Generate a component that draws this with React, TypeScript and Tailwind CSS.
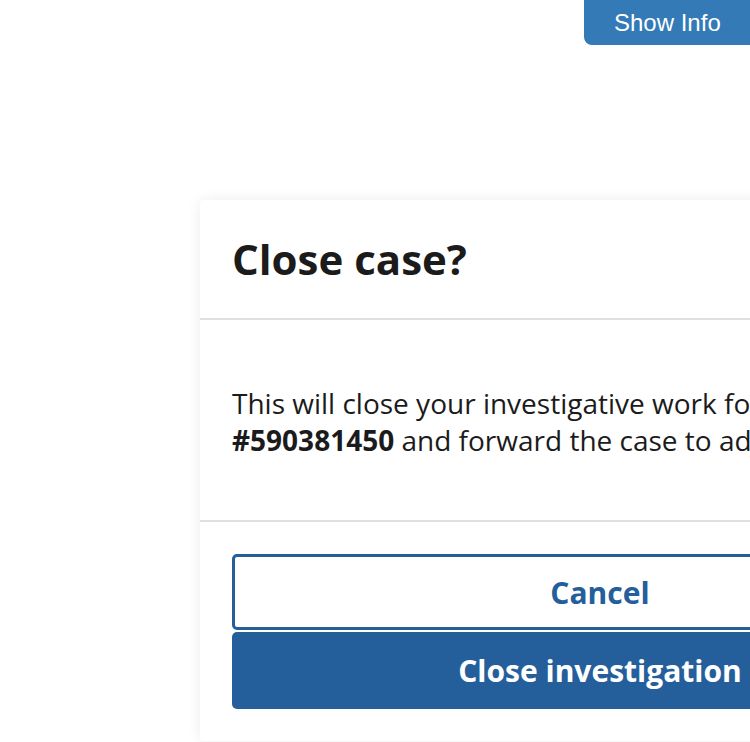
export default function App() {
  return (
    <div className="relative w-[750px] h-[742px] overflow-hidden bg-white [font-variant-ligatures:none]" style={{ fontFamily: "'Open Sans', 'Noto Sans', sans-serif" }}>
      <button
        className="absolute top-0 left-[584px] w-[190px] h-[45px] rounded-bl-[8px] bg-[#337ab7] text-white text-[24px] pl-[30px] text-left leading-none"
        style={{ fontFamily: "'Liberation Sans', Arial, sans-serif" }}
      >
        Show Info
      </button>
      <div className="pt-[200px] pl-[200px]">
        <div className="w-[800px] h-[541px] bg-white rounded-[4px] shadow-[0_0_14px_rgba(0,0,0,0.08)] flex flex-col">
          <div className="h-[120px] shrink-0 border-b-2 border-[#e0e0e0] pl-[32px] flex items-center">
            <h1 className="text-[42px] font-bold text-[#1b1b1b] leading-none">Close case?</h1>
          </div>
          <div className="h-[202px] shrink-0 border-b-2 border-[#e0e0e0] pl-[32px] pr-[32px] pt-[4px] flex items-center">
            <p className="text-[28px] leading-[37px] text-[#1b1b1b]">
              This will close your investigative work for case <span className="font-bold">#590381450</span> and forward the case to adjudication.
            </p>
          </div>
          <div className="px-[32px] pt-[32px] flex flex-col gap-[2px]">
            <button className="h-[76px] w-full border-[3px] border-[#245f9c] rounded-[5px] bg-white text-[#245f9c] text-[30px] font-bold">
              Cancel
            </button>
            <button className="h-[77px] w-full rounded-[5px] bg-[#245f9c] text-white text-[30px] font-bold">
              Close investigation
            </button>
          </div>
        </div>
      </div>
    </div>
  );
}
